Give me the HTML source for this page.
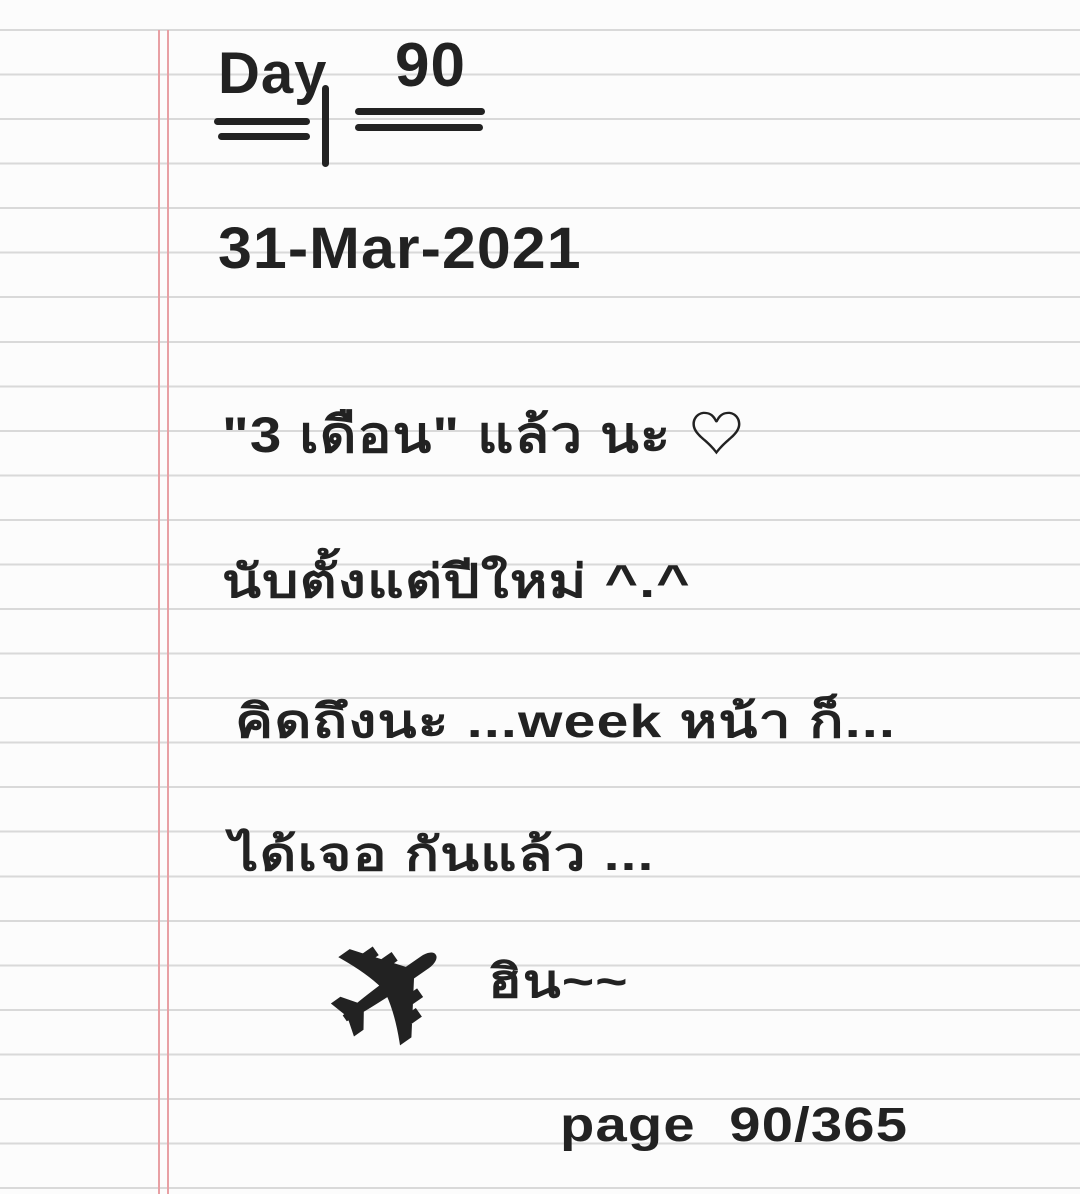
<!DOCTYPE html>
<html><head><meta charset="utf-8"><style>
html,body{margin:0;padding:0}
body{width:1080px;height:1194px;position:relative;overflow:hidden;background:#fcfcfc;font-family:"Liberation Sans","Noto Sans CJK SC",sans-serif;color:#222}
.lines{position:absolute;left:0;top:29px;width:1080px;height:1165px;background:repeating-linear-gradient(to bottom,#d9d9d9 0,#d9d9d9 2px,transparent 2px,transparent 44.54px)}
.r{position:absolute;top:30px;bottom:0;width:2px;background:#e8a0a4}
.t{position:absolute;font-weight:bold;white-space:nowrap;letter-spacing:1px;transform-origin:0 0}
.u{position:absolute;height:7px;background:#222;border-radius:4px}
</style></head><body>
<div class="lines"></div>
<div class="r" style="left:158px"></div>
<div class="r" style="left:167px"></div>
<div class="t" style="left:218px;top:40px;font-size:58px">Day</div>
<div class="u" style="left:214px;top:118px;width:96px"></div>
<div class="u" style="left:218px;top:133px;width:92px"></div>
<div class="u" style="left:322px;top:85px;width:7px;height:82px"></div>
<div class="t" style="left:395px;top:30px;font-size:62px">90</div>
<div class="u" style="left:355px;top:108px;width:130px"></div>
<div class="u" style="left:355px;top:124px;width:128px"></div>
<div class="t" style="left:218px;top:215px;font-size:58px;transform:scaleX(1.05)">31-Mar-2021</div>
<div class="t" style="left:222px;top:395px;font-size:50px;transform:scaleX(1.13)">"3 เดือน" แล้ว นะ ♡</div>
<div class="t" style="left:222px;top:545px;font-size:46px;transform:scaleX(1.24)">นับตั้งแต่ปีใหม่ ^.^</div>
<div class="t" style="left:235px;top:685px;font-size:46px;transform:scaleX(1.24)">คิดถึงนะ ...week หน้า ก็...</div>
<div class="t" style="left:230px;top:818px;font-size:46px;transform:scaleX(1.23)">ได้เจอ กันแล้ว ...</div>
<div class="t" style="left:290px;top:955px;font-size:150px;transform:rotate(-35deg)">✈</div>
<div class="t" style="left:488px;top:945px;font-size:46px;transform:scaleX(1.2)">ฮิน~~</div>
<div class="t" style="left:560px;top:1098px;font-size:48px;transform:scaleX(1.17)">page &nbsp;90/365</div>
</body></html>
